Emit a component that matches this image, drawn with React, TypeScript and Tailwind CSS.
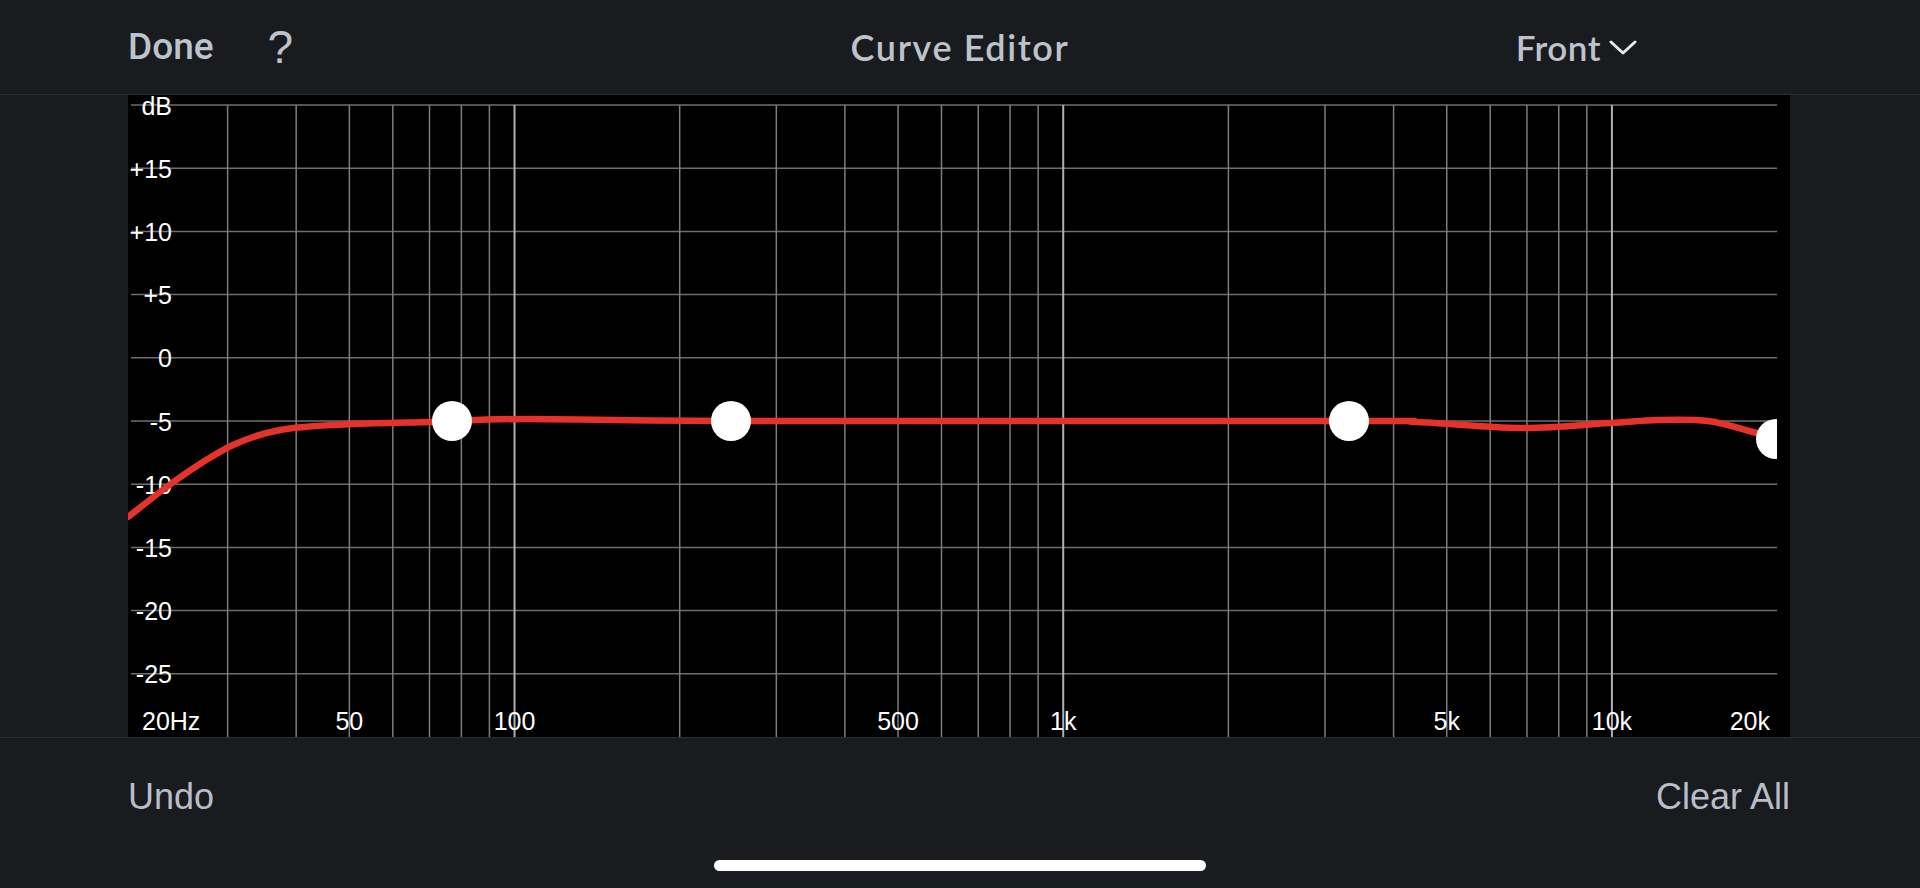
import React from 'react';

const W = 1662;
const H = 642;
const X0 = 3;
const DECADE = 548.7;

const fx = (f: number) => X0 + DECADE * Math.log10(f / 20);
const fy = (db: number) => 10 + (20 - db) * 12.64;

const dbLabels = [
  { db: 20, label: 'dB' },
  { db: 15, label: '+15' },
  { db: 10, label: '+10' },
  { db: 5, label: '+5' },
  { db: 0, label: '0' },
  { db: -5, label: '-5' },
  { db: -10, label: '-10' },
  { db: -15, label: '-15' },
  { db: -20, label: '-20' },
  { db: -25, label: '-25' },
];

const minorFreqs = [
  30, 40, 50, 60, 70, 80, 90, 200, 300, 400, 500, 600, 700, 800, 900, 2000, 3000, 4000, 5000, 6000,
  7000, 8000, 9000,
];
const majorFreqs = [100, 1000, 10000];

const freqLabels = [
  { f: 50, label: '50' },
  { f: 100, label: '100' },
  { f: 500, label: '500' },
  { f: 1000, label: '1k' },
  { f: 5000, label: '5k' },
  { f: 10000, label: '10k' },
];

// curve samples in chart coords
const curvePts: [number, number][] = [
  [0, 422],
  [40, 391],
  [75, 367],
  [105, 350],
  [135, 339],
  [165, 333],
  [225, 329],
  [302, 327],
  [324, 326],
  [400, 324],
  [603, 326],
  [1221, 326],
  [1289, 327],
  [1392, 333],
  [1482, 328],
  [1530, 325],
  [1580, 326],
  [1625, 337],
  [1648, 344],
  [1662, 348],
];

const nodes: [number, number][] = [
  [324, 326],
  [603, 326],
  [1221, 326],
  [1648, 344],
];

function smoothPath(pts: [number, number][]) {
  let d = `M ${pts[0][0]} ${pts[0][1]}`;
  for (let i = 0; i < pts.length - 1; i++) {
    const p0 = pts[i - 1] || pts[i];
    const p1 = pts[i];
    const p2 = pts[i + 1];
    const p3 = pts[i + 2] || p2;
    const c1x = p1[0] + (p2[0] - p0[0]) / 6;
    const c1y = p1[1] + (p2[1] - p0[1]) / 6;
    const c2x = p2[0] - (p3[0] - p1[0]) / 6;
    const c2y = p2[1] - (p3[1] - p1[1]) / 6;
    d += ` C ${c1x} ${c1y}, ${c2x} ${c2y}, ${p2[0]} ${p2[1]}`;
  }
  return d;
}

const CurveChart = () => {
  const right = fx(20000);
  return (
    <svg width={W} height={H} viewBox={`0 0 ${W} ${H}`} className="block">
      <defs>
        <clipPath id="plot">
          <rect x="0" y="0" width={right} height={H} />
        </clipPath>
      </defs>

      {dbLabels.map((d) => (
        <line
          key={d.db}
          x1={X0}
          x2={right}
          y1={fy(d.db)}
          y2={fy(d.db)}
          stroke="#6e6e6e"
          strokeWidth="1.5"
        />
      ))}
      {minorFreqs.map((f) => (
        <line key={f} x1={fx(f)} x2={fx(f)} y1={fy(20)} y2={H} stroke="#7c7c7c" strokeWidth="1.5" />
      ))}
      {majorFreqs.map((f) => (
        <line key={f} x1={fx(f)} x2={fx(f)} y1={fy(20)} y2={H} stroke="#b0b0b0" strokeWidth="2" />
      ))}

      <g fill="#ffffff" fontFamily="'Liberation Sans', Arial, sans-serif" fontSize="25">
        {dbLabels.map((d) => (
          <text key={d.db} x={44} y={fy(d.db) + 9.5} textAnchor="end">
            {d.label}
          </text>
        ))}
        <text x={14} y={635}>
          20Hz
        </text>
        {freqLabels.map((l) => (
          <text key={l.label} x={fx(l.f)} y={635} textAnchor="middle">
            {l.label}
          </text>
        ))}
        <text x={1642} y={635} textAnchor="end">
          20k
        </text>
      </g>

      <g clipPath="url(#plot)">
        <path d={smoothPath(curvePts)} fill="none" stroke="#e5322a" strokeWidth="6.5" strokeLinecap="round" />
        {nodes.map(([x, y]) => (
          <circle key={x} cx={x} cy={y} r="20" fill="#ffffff" />
        ))}
      </g>
    </svg>
  );
};

export default function App() {
  return (
    <div className="flex h-[888px] w-[1920px] flex-col overflow-hidden bg-[#1a1b1f]">
      <header className="grid h-[95px] shrink-0 grid-cols-[1fr_auto_1fr] items-center border-b border-[#2c2d31]">
        <div className="flex items-center pl-[128px]">
          <span className="font-['Roboto',sans-serif] text-[37px] font-medium text-[#bcc3cd]">Done</span>
          <span className="ml-[54px] font-['Liberation_Sans',sans-serif] text-[46px] font-light leading-none text-[#bcc3cd]">
            ?
          </span>
        </div>
        <h1 className="font-['Lato',sans-serif] text-[36px] font-semibold tracking-[1.6px] text-[#bcc3cd]">
          Curve Editor
        </h1>
        <div className="flex items-center justify-end pr-[283px]">
          <span className="font-['Lato',sans-serif] text-[35px] font-semibold tracking-[0.5px] text-[#bcc3cd]">
            Front
          </span>
          <svg width="28" height="16" viewBox="0 0 28 16" className="ml-[8px] mt-[2px]">
            <path d="M2 2 L14 13 L26 2" fill="none" stroke="#e6e9ee" strokeWidth="3" strokeLinecap="round" strokeLinejoin="round" />
          </svg>
        </div>
      </header>

      <main className="flex h-[642px] shrink-0">
        <div className="w-[128px] shrink-0" />
        <div className="w-[1662px] shrink-0 bg-black">
          <CurveChart />
        </div>
        <div className="flex-1" />
      </main>

      <footer className="flex flex-1 flex-col border-t border-[#2c2d31]">
        <div className="flex h-[118px] items-center justify-between px-[128px] pr-[130px] font-['Liberation_Sans',sans-serif] text-[36px] text-[#b7bec9]">
          <span>Undo</span>
          <span>Clear All</span>
        </div>
        <div className="mx-auto mt-[4px] h-[11px] w-[492px] rounded-full bg-white" />
      </footer>
    </div>
  );
}
